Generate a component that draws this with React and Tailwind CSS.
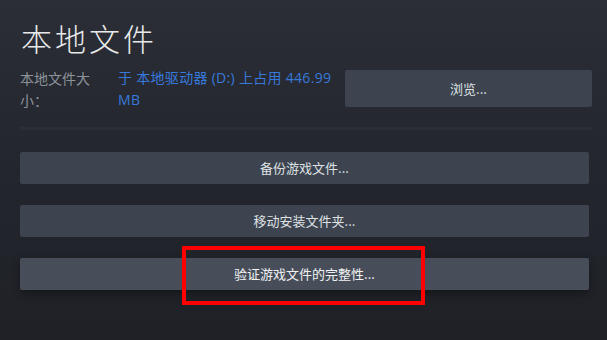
const font = { fontFamily: '"Noto Sans CJK SC", "Noto Sans", sans-serif' }

const ActionButton = ({ label, hover }) => (
  <button
    className={`flex h-[32px] w-full items-center justify-center rounded-[2px] text-[13px] ${
      hover
        ? 'bg-[#474e5a] text-[#f1f2f3] shadow-[0_4px_8px_rgba(0,0,0,0.35)]'
        : 'bg-[#3d4450] text-[#dfe1e3]'
    }`}
  >
    {label}
  </button>
)

export default function App() {
  return (
    <div
      style={font}
      className="relative h-[340px] w-[607px] overflow-hidden bg-gradient-to-b from-[#2b2e36] via-[#23262d] to-[#1f2127] pl-[20px] pr-[15px]"
    >
      <h1 className="pt-[18px] pl-[1px] text-[31px] font-light leading-[40px] tracking-[3px] text-[#e8e9ea]">
        本地文件
      </h1>

      <div className="mt-[9px] flex items-start">
        <div className="w-[80px] shrink-0 text-[14px] leading-[22px] text-[#8d939b]">
          本地文件大小：
        </div>
        <div
          style={{ fontFamily: '"Open Sans", "Noto Sans CJK SC", sans-serif' }}
          className="ml-[18px] w-[224px] text-[14px] leading-[22px] tracking-[0.3px] text-[#3779dc]"
        >
          于 本地驱动器 (D:) 上占用 446.99 MB
        </div>
        <button className="ml-auto mt-[3px] flex h-[37px] w-[247px] items-center justify-center rounded-[2px] bg-[#3d4450] text-[13px] text-[#dfe1e3]">
          浏览...
        </button>
      </div>

      <div className="mt-[16px] h-[3px] w-full bg-[#2b2e35]" />

      <div className="mt-[22px] flex w-[569px] flex-col gap-[21px]">
        <ActionButton label="备份游戏文件..." />
        <ActionButton label="移动安装文件夹..." />
        <ActionButton label="验证游戏文件的完整性..." hover />
      </div>

      <div className="absolute left-[182px] top-[246px] h-[59px] w-[243px] border-[4px] border-[#ff0000]" />
    </div>
  )
}
